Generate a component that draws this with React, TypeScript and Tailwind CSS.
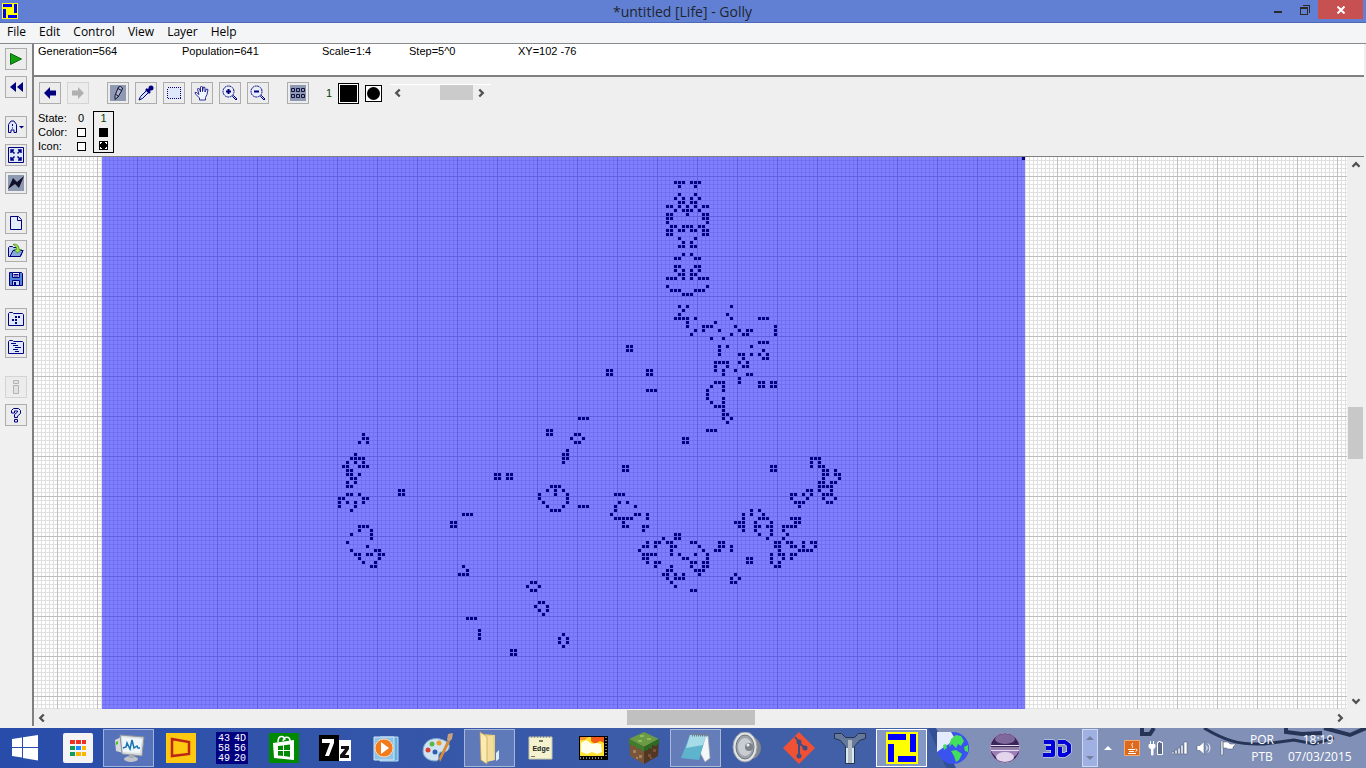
import React from 'react';
import { ChevronDown, ChevronLeft, ChevronRight, ChevronUp } from 'lucide-react';

interface Cluster {
  x: number;
  y: number;
  // one row per "/", live columns separated by spaces
  rows: string;
}

const BLOCK = '0 1/0 1';
const BLINKER = '0 1 2';
const BEEHIVE = '1 2/0 3/1 2';

const clusters: Cluster[] = [
  {
    x: 158,
    y: 6,
    rows:
      '2 3 4 6 7 8/3 7//3 7/2 4 6 8/3 4 6 7/0 1 3 5 7 9 10/2 4 5 6 8/0 1 5 9 10/0 1 9 10/0 10/1 2 4 5 6 8 9/' +
      '0 1 3 4 6 7 9 10/0 1 9 10/3 7/4 6/3 4 6 7//4 6/2 3 7 8//2 3 7 8/2 4 6 8/3 4 6 7/0 1 2 4 6 8 9 10//' +
      '0 10/1 2 3 7 8 9/4 5 6',
  },
  {
    x: 160,
    y: 37,
    rows:
      '1 3 14/2/1 13/0 1 2 3 5 14 21 22 23/3 10/3 7 8 9 15 25/5 7 11 16 18 19 25/4 14 17 18 25/9 12/21 22 23/' +
      '11 13 19/11 22/11 16 17 19 21 23/17 22 23/10 11 12 13 16 18/10 13 17 18/10 12 15/12 18 19/16/' +
      '10 11 12 16 21 22 24 25/9 12 21 22 24 25/8 12/8/8 12/9 12/10 11 12/12/12 13/12 14/13//8 9 10//2 3/2 3',
  },
  {
    x: 76,
    y: 69,
    rows:
      '6/6 7/5 7///4/3 4 5 6/2 4 6/1 2 5 6 7/2 3/2 3 5/3 4/2 4/2 3//2 3 5/0 1 6 7/0 2 4 6/0 4/3////' +
      '5 6 7/5 8/3 8/8/2/7/3 9 10/4 5 7 8 10 11/5 10/6 9/8 9',
  },
  {
    x: 144,
    y: 75,
    rows:
      '50 51 52/50 52/3 4 40 41 50 52 53/3 4 40 41 53 54 56/53 54 56 57/53 57/52 53 55 56/52 53 54 55/49 50 52 55/' +
      '1 2 3 45 46 48 50 53 54 55/45 49 53 56/2 4 46 47 48 54 55/1 6 47/1 35 37/0 6 7 9 33 35 38/' +
      '1 2 3 4 5 9 33 37 38 39 45 46 47/3 31 32 33 36 40 46 47/3 4 8 9 32 33 36 37 39 40 43 44 45 46/8 33 36 40 43/' +
      '16 17 37 40 44/13 16 17 39 43/9 11 12 14 15 20 21 27 28 41 42 44 45 48 50 51/' +
      '8 9 11 15 16 22 27 28 30 41 42 45 46 48 51/7 15 23 26 27 30 42 47 48 49 50/8 9 10 11 15 17 21 24 40 42 43 45 46/' +
      '8 9 18 19 24 34 35 40 43 45/9 11 12 20 21 23 24 34 35 40 42/11 15 20 23 24 41 42/14 15 21 22 23/' +
      '13 14 16 18 22 31/14 16 17 18 30 32/15 30 31/16/20 21',
  },
  { x: 126, y: 82, rows: '3 4 5/2 4 6/0 4 7/0 7/1 7/2 6/3 4 5' },
  { x: 132, y: 73, rows: '1/0 1/0 1/0' },
  { x: 106, y: 102, rows: '1/2/0 1 2' },
  { x: 125, y: 111, rows: '1 2/0 3/1 3/2' },
  { x: 131, y: 119, rows: '1/0 2/0 2/1' },
  { x: 111, y: 118, rows: '0/0/0' },
  { x: 134, y: 69, rows: BEEHIVE },
  { x: 123, y: 106, rows: BEEHIVE },
  { x: 153, y: 58, rows: BLINKER },
  { x: 136, y: 65, rows: BLINKER },
  { x: 136, y: 87, rows: BLINKER },
  { x: 107, y: 89, rows: BLINKER },
  { x: 108, y: 115, rows: BLINKER },
  { x: 148, y: 47, rows: BLOCK },
  { x: 143, y: 53, rows: BLOCK },
  { x: 153, y: 53, rows: BLOCK },
  { x: 91, y: 83, rows: BLOCK },
  { x: 128, y: 68, rows: BLOCK },
  { x: 115, y: 79, rows: BLOCK },
  { x: 118, y: 79, rows: BLOCK },
  { x: 104, y: 91, rows: BLOCK },
  { x: 119, y: 123, rows: BLOCK },
  { x: 247, y: 0, rows: '0' },
];

const cellPath = clusters
  .flatMap(c =>
    c.rows.split('/').flatMap((row, r) =>
      row
        .split(' ')
        .filter(Boolean)
        .map(col => `M${(c.x + Number(col)) * 4} ${(c.y + r) * 4}h3v3h-3z`)
    )
  )
  .join('');

const minorLines = Array.from({ length: 9 }, (_, i) => `M${(i + 1) * 4} 0h1v40h-1zM0 ${(i + 1) * 4}h40v1h-40z`).join('');

const Universe: React.FC = () => (
  <svg className="block h-full w-full bg-white" shapeRendering="crispEdges" role="img" aria-label="Universe">
    <defs>
      <pattern id="grid" x="23" y="19" width="40" height="40" patternUnits="userSpaceOnUse">
        <path d={minorLines} fill="#e0e0e0" />
        <path d="M0 0h1v40h-1zM0 0h40v1h-40z" fill="#bebebe" />
      </pattern>
    </defs>
    <rect width="100%" height="100%" fill="url(#grid)" />
    <path d={cellPath} fill="#000" />
    <rect x="68" width="923" height="100%" fill="#0000ff" fillOpacity="0.5" />
  </svg>
);

const NAVY = '#000080';

const Icon: React.FC<{ children: React.ReactNode; size?: number; box?: string }> = ({ children, size = 16, box = '0 0 16 16' }) => (
  <svg width={size} height={size} viewBox={box} fill="none" stroke={NAVY} className="shrink-0" aria-hidden="true">
    {children}
  </svg>
);

const GollyLogo: React.FC<{ size: number }> = ({ size }) => (
  <Icon size={size}>
    <g stroke="none" shapeRendering="crispEdges">
      <path d="M0 0h16v16H0z" fill="#ff0" />
      <path d="M1 1h9v3H1zM12 1h3v9h-3zM1 6h3v9H1zM6 12h9v3H6z" fill="#00f" />
    </g>
  </Icon>
);

const Pressed = () => <path d="M0 0h16v16H0z" fill="#8f99b1" stroke="none" />;

const icons: Record<string, React.ReactNode> = {
  play: <path d="M2.500 2.500L13.500 8L2.500 13.500z" fill="#10a010" stroke="#0a6a0a" />,
  reset: <path d="M8 3v10L2 8zM15 3v10L9 8z" fill={NAVY} stroke="none" />,
  algo: (
    <>
      <path d="M.5 13.500V5.500L3 2H6L8.500 5.500V13.500H6V11H3V13.500z" fill="#dfe8fb" />
      <path d="M4.500 5v2M4.500 8.500v1" />
      <path d="M11 7h5L13.500 9.500z" fill={NAVY} stroke="none" />
    </>
  ),
  fit: (
    <>
      <path d="M.5.5h15v15H.5z" fill="#dfe8fb" />
      <path d="M3 6V3h3M3 3l3.500 3.500M10 3h3v3M13 3L9.500 6.500M3 10v3h3M3 13l3.500-3.500M10 13h3v-3M13 13L9.500 9.500" strokeWidth="1.500" />
    </>
  ),
  hyper: (
    <>
      <Pressed />
      <path d="M0 14L5 3l4 4 7-6-5 12-4-4z" fill="#10102e" stroke="none" />
    </>
  ),
  new: (
    <>
      <path d="M2.500 1.500h8l3 3v10h-11z" fill="#e4edfc" />
      <path d="M9.500 1.500v4h4" />
    </>
  ),
  open: (
    <>
      <path d="M.5 13.500v-9l1-1h3l1 1h4v3h5.500l-2.500 6z" fill="#b9cdf2" />
      <path d="M2 13.500l3-6h10l-3 6z" fill="#88a8e0" />
      <path d="M5 1.500c4-1 6 1 6 5h2.500L9.500 10 6 6.500h2.500C8.500 4 7.500 2.500 5 1.500z" fill="#a4ea40" stroke="#26762a" strokeWidth=".7" />
    </>
  ),
  save: (
    <>
      <path d="M1.500 1.500h12l1 1v12h-13z" fill="#5285d8" />
      <path d="M4.500 1.500h7v5h-7z" fill="#f4f8ff" />
      <path d="M5.500 3.500h5M5.500 5h5" />
      <path d="M4.500 9.500h7v5h-7z" fill="#c4d5f4" />
      <path d="M6 11h2v3H6z" fill={NAVY} stroke="none" />
    </>
  ),
  patterns: (
    <>
      <path d="M.5 14.500V2.500l1-1h3l1 1h9l1 1v11z" fill="#dfe8fb" />
      <path d="M7 5h2v2H7zM10 5h2v2h-2zM4 8h2v2H4zM7 8h2v2H7zM7 11h2v2H7z" fill={NAVY} stroke="none" />
    </>
  ),
  scripts: (
    <>
      <path d="M.5 14.500V2.500l1-1h3l1 1h9l1 1v11z" fill="#dfe8fb" />
      <path d="M3 4.500h5M5 6.500h5M7 8.500h6M5 10.500h5M7 12.500h4" />
    </>
  ),
  info: <path d="M5.500 1.500h5v3h-5zM5.500 6.500h5v8h-5z" fill="#e2e2e2" stroke="#b4b4b4" />,
  help: (
    <>
      <path d="M3.500 6V3.500L5.500 1.500H10.500L12.500 3.500V6.500L9.500 9V10.500H6.500V7.500L9.500 5V4H6.500V6z" fill="#dfe8fb" />
      <path d="M6.500 12.500h3v2.500h-3z" fill="#dfe8fb" />
    </>
  ),
  undo: <path d="M2 8l6-6v3.500h6v5H8V14z" fill={NAVY} stroke="none" />,
  redo: <path d="M14 8L8 2v3.500H2v5h6V14z" fill="#b0b0b0" stroke="none" />,
  draw: (
    <>
      <Pressed />
      <path d="M5 10.500L8.500 2l2-.5 2 1.500-1 3L8 12l-3 2.500zM8 3.500l3.500 2M6 9.500l2.500 2" fill="#a9b4cc" stroke="#10102e" />
    </>
  ),
  pick: (
    <>
      <path d="M1 15l1.500-3.500L9 5l2 2-6.500 6.500z" fill="#cfe0fb" />
      <path d="M8 4l4 4M10 6l2.500-2.500" strokeWidth="2.500" />
      <circle cx="13" cy="3" r="2.500" fill={NAVY} stroke="none" />
    </>
  ),
  select: <path d="M1.500 2.500h13v11h-13z" fill="#dfe8fb" strokeDasharray="1 1" shapeRendering="crispEdges" />,
  move: (
    <path
      d="M5.500 15v-2L1.500 9 1 7.500h1.500L5 9.500 3.500 4l1-1 1 1L6.500 7V2l1-1 1 1v4.500l1-4.500 1.500.5V7l1.500-3 1.500.5-1 5-1.500 3V15z"
      fill="#f0f4ff"
      strokeWidth=".8"
    />
  ),
  zoomIn: (
    <>
      <circle cx="6.500" cy="6.500" r="5.500" fill="#e8effc" strokeDasharray="2 .6" />
      <path d="M4 6.500h5M6.500 4v5" strokeWidth="2" />
      <path d="M10.500 11.500l1-1 3.500 3.500-1 1z" fill="#b9cdf2" />
    </>
  ),
  zoomOut: (
    <>
      <circle cx="6.500" cy="6.500" r="5.500" fill="#e8effc" strokeDasharray="2 .6" />
      <path d="M4 6.500h5" strokeWidth="2" />
      <path d="M10.500 11.500l1-1 3.500 3.500-1 1z" fill="#b9cdf2" />
    </>
  ),
  allStates: (
    <>
      <Pressed />
      <path d="M1.500 3.500h3v3h-3zM6.500 3.500h3v3h-3zM11.500 3.500h3v3h-3zM1.500 9.500h3v3h-3zM6.500 9.500h3v3h-3zM11.500 9.500h3v3h-3z" stroke="#101040" />
    </>
  ),
};

const ToolButton: React.FC<{ icon: string; label: string; disabled?: boolean }> = ({ icon, label, disabled }) => (
  <button
    aria-label={label}
    disabled={disabled}
    className="flex size-[22px] shrink-0 items-center justify-center border border-[#adadad] bg-[#ececec] disabled:border-[#d4d4d4]"
  >
    <Icon>{icons[icon]}</Icon>
  </button>
);

const sideGroups = [
  [['play', 'Start generating'], ['reset', 'Reset']],
  [['algo', 'Set algorithm'], ['fit', 'Auto fit'], ['hyper', 'Hyperspeed']],
  [['new', 'New pattern'], ['open', 'Open pattern'], ['save', 'Save pattern']],
  [['patterns', 'Show patterns'], ['scripts', 'Show scripts']],
  [['info', 'Pattern info'], ['help', 'Help']],
];

const editGroups = [
  [['undo', 'Undo'], ['redo', 'Redo']],
  [['draw', 'Draw'], ['pick', 'Pick'], ['select', 'Select'], ['move', 'Move'], ['zoomIn', 'Zoom in'], ['zoomOut', 'Zoom out']],
  [['allStates', 'Show all states']],
];

const TitleBar = () => (
  <header className="flex h-[23px] shrink-0 items-start border-b border-[#4f68b8] bg-[#6180d3]">
    <div className="flex-1 pt-[3px] pl-0.5">
      <GollyLogo size={16} />
    </div>
    <h1 className="text-[14px] leading-[23px] text-[#20242e]">*untitled [Life] - Golly</h1>
    <div className="flex flex-1 justify-end pr-[3px]">
      <button aria-label="Minimize" className="flex h-[19px] w-[27px] items-center justify-center">
        <svg width="10" height="10" aria-hidden="true"><path d="M1 6h8v2H1z" fill="#2a2a2a" /></svg>
      </button>
      <button aria-label="Restore" className="flex h-[19px] w-[27px] items-center justify-center">
        <svg width="10" height="10" fill="none" stroke="#2a2a2a" shapeRendering="crispEdges" aria-hidden="true">
          <path d="M.5 2.500h7v7h-7zM.5 3.500h7M2.500.5h7v7" />
        </svg>
      </button>
      <button aria-label="Close" className="flex h-[19px] w-[45px] items-center justify-center bg-[#c75050]">
        <svg width="8" height="8" stroke="#fff" strokeWidth="2" aria-hidden="true"><path d="M.5.5l7 7M7.500.5l-7 7" /></svg>
      </button>
    </div>
  </header>
);

const MenuBar = () => (
  <nav className="flex h-[21px] shrink-0 gap-[13px] border-b border-[#8a8a8a] bg-[#f4f5f7] pb-0.5 pl-[7px] text-[12px] leading-[18px] text-black">
    {['File', 'Edit', 'Control', 'View', 'Layer', 'Help'].map(m => (
      <button key={m}>{m}</button>
    ))}
  </nav>
);

const StatusBar = () => (
  <div className="flex h-[33px] shrink-0 border-b-2 border-[#808080] bg-white pl-1 text-[11px] leading-[15px]">
    <span className="w-36">Generation=564</span>
    <span className="w-[140px]">Population=641</span>
    <span className="w-[87px]">Scale=1:4</span>
    <span className="w-[109px]">Step=5^0</span>
    <span>XY=102 -76</span>
  </div>
);

const Arrow: React.FC<{ label: string; icon: typeof ChevronUp }> = ({ label, icon: Glyph }) => (
  <button aria-label={label} className="flex size-4 shrink-0 items-center justify-center">
    <Glyph size={14} strokeWidth={4} strokeLinecap="butt" strokeLinejoin="miter" />
  </button>
);

const Swatch: React.FC<{ kind: 'empty' | 'solid' | 'round' }> = ({ kind }) => (
  <svg width="9" height="9" className="mx-auto" shapeRendering="crispEdges" aria-hidden="true">
    <path d="M.5.5h8v8h-8z" fill={kind === 'solid' ? '#000' : '#fff'} stroke="#000" />
    {kind === 'round' && <path d="M3 1h3v1h1v1h1v3h-1v1h-1v1h-3v-1h-1v-1h-1v-3h1v-1h1z" fill="#000" />}
  </svg>
);

const EditBar = () => (
  <section className="h-20 shrink-0 border-b border-[#808080] bg-[#efefef] pl-1 text-[11px]">
    <div className="flex h-8 items-center">
      <div className="flex gap-[18px] pl-px">
        {editGroups.map((g, i) => (
          <div key={i} className="flex gap-1.5">
            {g.map(([icon, label]) => (
              <ToolButton key={icon} icon={icon} label={label} disabled={icon === 'redo'} />
            ))}
          </div>
        ))}
      </div>
      <span className="ml-[17px] w-3 text-[#064006]">1</span>
      <button aria-label="Drawing color" className="size-[21px] border border-black bg-black shadow-[inset_0_0_0_1px_#fff]" />
      <button aria-label="Drawing icon" className="ml-1.5 flex size-[17px] items-center justify-center border border-black bg-white">
        <span className="size-[13px] rounded-full bg-black" />
      </button>
      <div role="scrollbar" aria-label="Drawing state" aria-controls="states" aria-valuenow={1} className="mb-0.5 ml-2 flex h-[17px] w-[101px] items-center border-t border-white text-[#505050]">
        <Arrow label="Previous state" icon={ChevronLeft} />
        <span className="ml-[34px] h-[15px] w-[33px] bg-[#cbcbcb]" />
        <Arrow label="Next state" icon={ChevronRight} />
      </div>
    </div>
    <table id="states" className="mt-[2px] border-separate border-spacing-0 text-center leading-[13px]">
      <tbody>
        <tr className="h-[14px]">
          <th scope="row" className="w-[31px] p-0 text-left font-normal">State:</th>
          <td className="w-6 p-0">0</td>
          <td className="w-[21px] border-x border-t border-black p-0 text-[#064006]">1</td>
        </tr>
        <tr className="h-[14px]">
          <th scope="row" className="p-0 text-left font-normal">Color:</th>
          <td className="p-0"><Swatch kind="empty" /></td>
          <td className="border-x border-black p-0"><Swatch kind="solid" /></td>
        </tr>
        <tr className="h-[14px]">
          <th scope="row" className="p-0 text-left font-normal">Icon:</th>
          <td className="p-0"><Swatch kind="empty" /></td>
          <td className="border-x border-b border-black p-0"><Swatch kind="round" /></td>
        </tr>
      </tbody>
    </table>
  </section>
);

const taskIcons: { label: string; active?: boolean; art: React.ReactNode }[] = [
  {
    label: 'Apps',
    art: (
      <g stroke="none">
        <rect x="1" y="1" width="30" height="30" rx="2" fill="#f4f4f4" />
        <path d="M8 8h5v4H8zM14 8h5v4h-5zM20 8h4v4h-4z" fill="#ee3124" />
        <path d="M8 14h5v4H8zM8 20h5v4H8z" fill="#0f9d58" />
        <path d="M14 14h5v4h-5z" fill="#1a8cff" />
        <path d="M20 14h4v4h-4zM14 20h5v4h-5zM20 20h4v4h-4z" fill="#fbb605" />
      </g>
    ),
  },
  {
    label: 'Task Manager',
    active: true,
    art: (
      <g stroke="none">
        <path d="M2 8l8-4v17l-7-2z" fill="#d6d8da" />
        <path d="M3 10l2-1v3l-2 1z" fill="#4bc51e" />
        <path d="M7 3l24 2-2 19-20-2z" fill="#d9dddf" stroke="#8b929b" />
        <path d="M9 5l20 2-2 14-17-1z" fill="#eef5fb" />
        <path d="M10 16l3-1 1-4 3 6 2-9 2 8 3-2 1 2h2" fill="none" stroke="#1674b0" strokeWidth="1.500" />
        <ellipse cx="18" cy="27" rx="7" ry="3" fill="#c0c4c8" />
        <path d="M16 22h5v4h-5z" fill="#a8adb3" />
      </g>
    ),
  },
  {
    label: 'Yellow Box',
    art: (
      <g stroke="none">
        <path d="M1 1h30v30H1z" fill="#fdc911" />
        <path d="M7 7l17 3v12l-17 2z" fill="none" stroke="#bf2514" strokeWidth="2.500" />
      </g>
    ),
  },
  {
    label: 'Hex Editor',
    art: (
      <g stroke="none">
        <path d="M0 0h32v32H0z" fill="#000080" />
        <g fill="#fff" fontFamily="Liberation Mono, monospace" fontSize="10">
          <text x="2" y="9">43</text><text x="18" y="9">4D</text>
          <text x="2" y="19">58</text><text x="18" y="19">56</text>
          <text x="2" y="29">49</text><text x="18" y="29">20</text>
        </g>
      </g>
    ),
  },
  {
    label: 'Store',
    art: (
      <g stroke="none">
        <path d="M1 1h30v30H1z" fill="#008a00" />
        <path d="M10 10c0-7 6-7 7-2M15 9c1-5 7-5 7 0" fill="none" stroke="#fff" strokeWidth="1.500" />
        <path d="M5 11l21-3v20L6 26z" fill="#fff" />
        <path d="M10 14l5-.6V18h-5zM16 13.300l6-.7V18h-6zM10 19h5v5l-5-.6zM16 19h6v6l-6-.9z" fill="#008a00" />
      </g>
    ),
  },
  {
    label: '7-Zip',
    art: (
      <g stroke="none">
        <path d="M0 3h20v26H0z" fill="#000" />
        <path d="M20 8h12v21H20z" fill="#fff" />
        <path d="M3 7h12v4l-5 13H6l5-13H3z" fill="#fff" />
        <path d="M22 14h8v3l-4 6h4v3h-9v-3l5-6h-4z" fill="#111" />
      </g>
    ),
  },
  {
    label: 'Media Player',
    art: (
      <g stroke="none">
        <path d="M9 5h18v24H9z" fill="#66aedc" stroke="#b9dcf2" />
        <path d="M3 5h20v23H3z" fill="#8fc4e8" stroke="#d2e7f6" />
        <circle cx="13" cy="16" r="9" fill="#f27c1c" stroke="#fbd7b3" />
        <path d="M10 10l8 6-8 6z" fill="#fff" />
      </g>
    ),
  },
  {
    label: 'Paint',
    art: (
      <g stroke="none">
        <path d="M1 19C1 10 9 5 18 7s11 7 8 11-8 0-9 4 1 7-4 7S1 26 1 19z" fill="#cfe3f3" stroke="#7ba6c9" />
        <circle cx="10" cy="12" r="2.500" fill="#58b947" /><circle cx="17" cy="11" r="2.500" fill="#f09a28" />
        <circle cx="6" cy="18" r="2.500" fill="#d94236" /><circle cx="13" cy="20" r="2.500" fill="#2c5fae" />
        <path d="M18 30l-1-4 8-17 3 1z" fill="#d98a35" />
        <path d="M25 8l1-6 5-1-1 6-3 3z" fill="#c7a27a" />
      </g>
    ),
  },
  {
    label: 'Explorer',
    active: true,
    art: (
      <g stroke="none">
        <path d="M7 2l14 1v25l-9 2z" fill="#e9cf7c" />
        <path d="M10 4h9l1 24-8 2z" fill="#f3df9b" />
        <path d="M6 0l7 5v27L7 28z" fill="#fbeab1" stroke="#c3a24e" strokeWidth=".7" />
        <path d="M22 21l3-3v9l-3 2z" fill="#d8f1f8" />
      </g>
    ),
  },
  {
    label: 'Edge',
    art: (
      <g stroke="none">
        <path d="M4 5h23v22H4z" fill="#f5f3cf" stroke="#c5c7aa" />
        <path d="M6 5h20" stroke="#5b6270" strokeDasharray="1 2" />
        <path d="M14 8h4v2h-4zM6 24h4v1H6z" fill="#77795e" />
        <text x="16" y="19" textAnchor="middle" fontSize="7" fontWeight="bold" fill="#222" fontFamily="Liberation Sans, sans-serif">Edge</text>
      </g>
    ),
  },
  {
    label: 'Fire',
    art: (
      <g stroke="none">
        <path d="M2 4h29v24H2z" fill="#000" />
        <path d="M3 5h24v19H3z" fill="#ffdf2f" />
        <path d="M14 5h13v6l-4-2-5 3-4-3z" fill="#f45a17" />
        <path d="M3 5h8l-3 3H3z" fill="#f9922a" />
        <path d="M4 11l5-3 6 4 4-1 5 1 1 8-5 2-5-2-5 2-6-2z" fill="#fffdec" />
        <path d="M3 26h24M29 5v21" stroke="#fff" strokeDasharray="1 2" />
      </g>
    ),
  },
  {
    label: 'Minecraft',
    art: (
      <g stroke="none">
        <path d="M16 0l15 7-15 8L1 7z" fill="#6a9a43" />
        <path d="M1 7l15 8v17L2 24z" fill="#79553a" />
        <path d="M31 7l-15 8v17l14-8z" fill="#523723" />
        <path d="M1 7l15 8v5l-3-2v-2l-3 1-3-3v-1l-3 1-3-3z" fill="#3f7f2c" />
        <path d="M31 7l-15 8v4l4-1v-2l4 1v-4l4 1 3-3z" fill="#2e6b22" />
        <path d="M5 18h3v3H5zM11 23h3v3h-3zM8 25h2v2H8z" fill="#a5805c" />
        <path d="M20 22h3v3h-3zM25 17h3v3h-3zM22 27h2v-2h-2z" fill="#795238" />
        <path d="M12 3h4v2h-4zM19 6h4v2h-4zM10 8h4v2h-4z" fill="#8cbc5e" />
      </g>
    ),
  },
  {
    label: 'Notepad',
    active: true,
    art: (
      <g stroke="none">
        <path d="M11 3l17 1 2 22-5 4z" fill="#f4f6f7" stroke="#a3adb4" strokeWidth=".7" />
        <path d="M10 3l16 1-7 24-18-2z" fill="#5db4cc" />
        <path d="M10 3l16 1-3 9-17 3z" fill="#a7dbe7" />
        <path d="M12 3h16" stroke="#717e86" strokeWidth="3" strokeDasharray="1 1" />
      </g>
    ),
  },
  {
    label: 'Sound',
    art: (
      <g stroke="none">
        <ellipse cx="20" cy="16" rx="10" ry="11" fill="#83878d" />
        <ellipse cx="14" cy="15" rx="12" ry="15" fill="#e2e5e8" stroke="#9a9ea4" />
        <ellipse cx="14" cy="15" rx="9" ry="12" fill="#9ea4ab" stroke="#6f747b" />
        <ellipse cx="14" cy="15" rx="7" ry="9" fill="#c9cdd2" />
        <circle cx="18" cy="15" r="4" fill="#7d838b" />
        <circle cx="17" cy="13" r="1.500" fill="#eef0f2" />
      </g>
    ),
  },
  {
    label: 'Git',
    art: (
      <g stroke="none">
        <path d="M16 0l16 16-16 16L0 16z" fill="#f05033" />
        <path d="M12 5l4 5v14M16 11l6 5" fill="none" stroke="#3a4f86" strokeWidth="2" />
        <circle cx="16" cy="10" r="2.500" fill="#3a4f86" /><circle cx="22" cy="16" r="2.500" fill="#3a4f86" /><circle cx="16" cy="24" r="2.500" fill="#3a4f86" />
      </g>
    ),
  },
  {
    label: 'Tool',
    art: (
      <g stroke="#27324a">
        <path d="M.5 1.500h7l4 4h9l4-4h7v5l-6 2-5 6V31.500h-9V14.500l-5-6-6-2z" fill="#64799c" />
        <path d="M14 8h4v23h-4z" fill="#b3b9c0" stroke="none" />
        <path d="M12 16h2v15h-2zM18 16h2v15h-2z" fill="#d6ecf5" stroke="none" />
      </g>
    ),
  },
  { label: 'Golly', active: true, art: null },
  {
    label: 'Globe',
    art: (
      <g stroke="none">
        <circle cx="16" cy="16" r="16" fill="#3a53ee" />
        <path d="M0 0h14l3 5-5 7-5 3-7 5z" fill="#e4ebff" />
        <path d="M14 7l5-4 5 1 3 5-3 5-3-2-2 4-4-4-3 3zM14 19l5-1 6 4-3 6-3 2-2-6zM27 15l4-2v7l-3-1zM6 13l3-1 1 4-3 2z" fill="#42e05d" />
      </g>
    ),
  },
  {
    label: 'Eclipse',
    art: (
      <g stroke="none">
        <circle cx="16" cy="16" r="15" fill="#3b2659" stroke="#a48fbe" />
        <path d="M1.500 17h29a15 15 0 0 1-29 0z" fill="#9c80b8" />
        <ellipse cx="16" cy="25" rx="9" ry="5" fill="#e2d5ec" />
        <ellipse cx="16" cy="7" rx="10" ry="5" fill="#7e689c" />
        <path d="M2 13.500h28M1 16h30M2 18.500h28" stroke="#e6dcef" />
      </g>
    ),
  },
  {
    label: '3D',
    art: (
      <g fill="none" strokeLinejoin="round">
        <path d="M4 10h9v6H6M13 16v7H3M18 10h7l4 3v7l-4 3h-5v-8" stroke="#dfe5ff" strokeWidth="5" />
        <path d="M4 10h9v6H6M13 16v7H3M18 10h7l4 3v7l-4 3h-5v-8" stroke="#0000d8" strokeWidth="4" />
      </g>
    ),
  },
];

const Taskbar = () => (
  <footer className="relative flex h-10 shrink-0 items-stretch bg-linear-to-r from-[#284caa] via-[#4260a7] via-60% to-[#4662a6] text-[12px] text-white">
    <svg className="absolute right-0 h-10 w-[440px]" viewBox="0 0 440 40" preserveAspectRatio="xMaxYMid slice" fill="none" aria-hidden="true">
      <path d="M4 0h436v40H20z" fill="#8090b7" />
      <path d="M2 0h8l20 40H20z" fill="#315096" />
      <path d="M216 0v6h8l4-6M360 0v4l16 2 20-1M398 0l26 7 16-7" stroke="#263456" strokeWidth="4" />
      <path d="M278 0c20 12 34 17 60 16l30-4 20 4 20-6" stroke="#263456" strokeWidth="3" />
    </svg>
    <button aria-label="Start" className="relative mr-0.5 flex w-[50px] items-center justify-center">
      <svg width="26" height="26" viewBox="0 0 26 26" fill="#fff" aria-hidden="true">
        <path d="M0 4l10-1.500V12H0zM11 2.200L26 0v12H11zM0 13h10v9.500L0 21zM11 13h15v12.500L11 23z" />
      </svg>
    </button>
    <div className="relative flex flex-1">
      {taskIcons.map(t => (
        <button
          key={t.label}
          aria-label={t.label}
          className={`my-px flex w-[51px] shrink-0 items-center justify-center even:mr-px ${
            t.label === 'Golly' ? 'border border-white bg-white/35' : t.active ? 'border border-white/45 bg-white/20' : ''
          }`}
        >
          {t.art ? <Icon size={32} box="0 0 32 32">{t.art}</Icon> : <GollyLogo size={32} />}
        </button>
      ))}
      <div className="my-px flex w-4 shrink-0 flex-col items-center justify-between border border-white/50 bg-[#9fb1e2] py-1.5">
        <button aria-label="Scroll up"><svg width="8" height="4" className="block" fill="#75809f"><path d="M4 0l4 4H0z" /></svg></button>
        <button aria-label="Scroll down"><svg width="8" height="4" className="block" fill="#75809f"><path d="M4 4l4-4H0z" /></svg></button>
      </div>
    </div>
    <div className="relative flex items-center gap-2 pr-[18px]">
      <button aria-label="Show hidden icons" className="mr-1"><svg width="8" height="4" fill="#fff"><path d="M4 0l4 4H0z" /></svg></button>
      <Icon>
        <path d="M.5.5h15v15H.5z" fill="#dd6a1c" stroke="#f3a970" />
        <path d="M9 3c-3 2 1 3-1 5M4 9.500h7M5 11.500h5M4 13.500h8M11.500 9c2 0 2 2 0 2.500" stroke="#fff" />
      </Icon>
      <Icon>
        <path d="M2.500 1v3M5.500 1v3M1 4.500h6v3L5 9v6H3.500V9L1 7.500z" fill="#fff" stroke="#fff" />
        <path d="M9.500 2.500h1v-1h2v1h2v12h-5z" fill="#5f6b86" stroke="#fff" />
      </Icon>
      <Icon>
        <path d="M0 12h2v2H0zM3 10h2v4H3zM6 8h2v6H6zM9 5h2v9H9zM12 2h3v12h-3z" fill="#fff" stroke="#45506e" strokeWidth=".5" />
      </Icon>
      <Icon>
        <path d="M1 5.500h3l4-4v13l-4-4H1z" fill="#fff" stroke="#45506e" strokeWidth=".5" />
        <path d="M10 5.500c1.500 1.500 1.500 3.500 0 5M12 3.500c2.500 2.500 2.500 6.500 0 9" stroke="#fff" />
      </Icon>
      <Icon>
        <path d="M1 1h2v14H1zM3 2h5l2 2h6l-3 3v2H8L6 8H3z" fill="#fff" stroke="#45506e" strokeWidth=".5" />
      </Icon>
      <button className="ml-1.5 w-6 text-center leading-[17px]">POR<br />PTB</button>
      <time className="ml-1.5 w-[60px] text-center leading-[17px]">18:19<br />07/03/2015</time>
    </div>
  </footer>
);

const App: React.FC = () => (
  <div className="flex h-screen flex-col overflow-hidden bg-[#f0f0f0] font-['Open_Sans','Noto_Sans',sans-serif]">
    <TitleBar />
    <MenuBar />
    <main className="flex min-h-0 flex-1 font-['Liberation_Sans',Arial,sans-serif]">
      <aside className="flex w-8 shrink-0 flex-col gap-[18px] pt-1 pl-[5px]">
        {sideGroups.map((g, i) => (
          <div key={i} className="flex flex-col gap-1.5">
            {g.map(([icon, label]) => (
              <ToolButton key={icon} icon={icon} label={label} disabled={icon === 'info'} />
            ))}
          </div>
        ))}
      </aside>
      <div className="mr-0.5 mb-0.5 flex min-w-0 flex-1 flex-col border-l-2 border-[#808080]">
        <StatusBar />
        <EditBar />
        <div className="flex min-h-0 flex-1">
          <div className="min-w-0 flex-1">
            <Universe />
          </div>
          <div role="scrollbar" aria-label="Vertical" aria-controls="root" aria-valuenow={50} aria-orientation="vertical" className="flex w-[17px] flex-col items-center justify-between bg-[#efefef] text-[#505050]">
            <Arrow label="Scroll view up" icon={ChevronUp} />
            <span className="h-[52px] w-[15px] bg-[#c8c8c8]" />
            <Arrow label="Scroll view down" icon={ChevronDown} />
          </div>
        </div>
        <div role="scrollbar" aria-label="Horizontal" aria-controls="root" aria-valuenow={50} aria-orientation="horizontal" className="mr-4 flex h-[17px] shrink-0 items-center justify-between bg-[#efefef] text-[#505050]">
          <Arrow label="Scroll view left" icon={ChevronLeft} />
          <span className="h-[15px] w-32 bg-[#c0c0c0]" />
          <Arrow label="Scroll view right" icon={ChevronRight} />
        </div>
      </div>
    </main>
    <Taskbar />
  </div>
);

export default App;
